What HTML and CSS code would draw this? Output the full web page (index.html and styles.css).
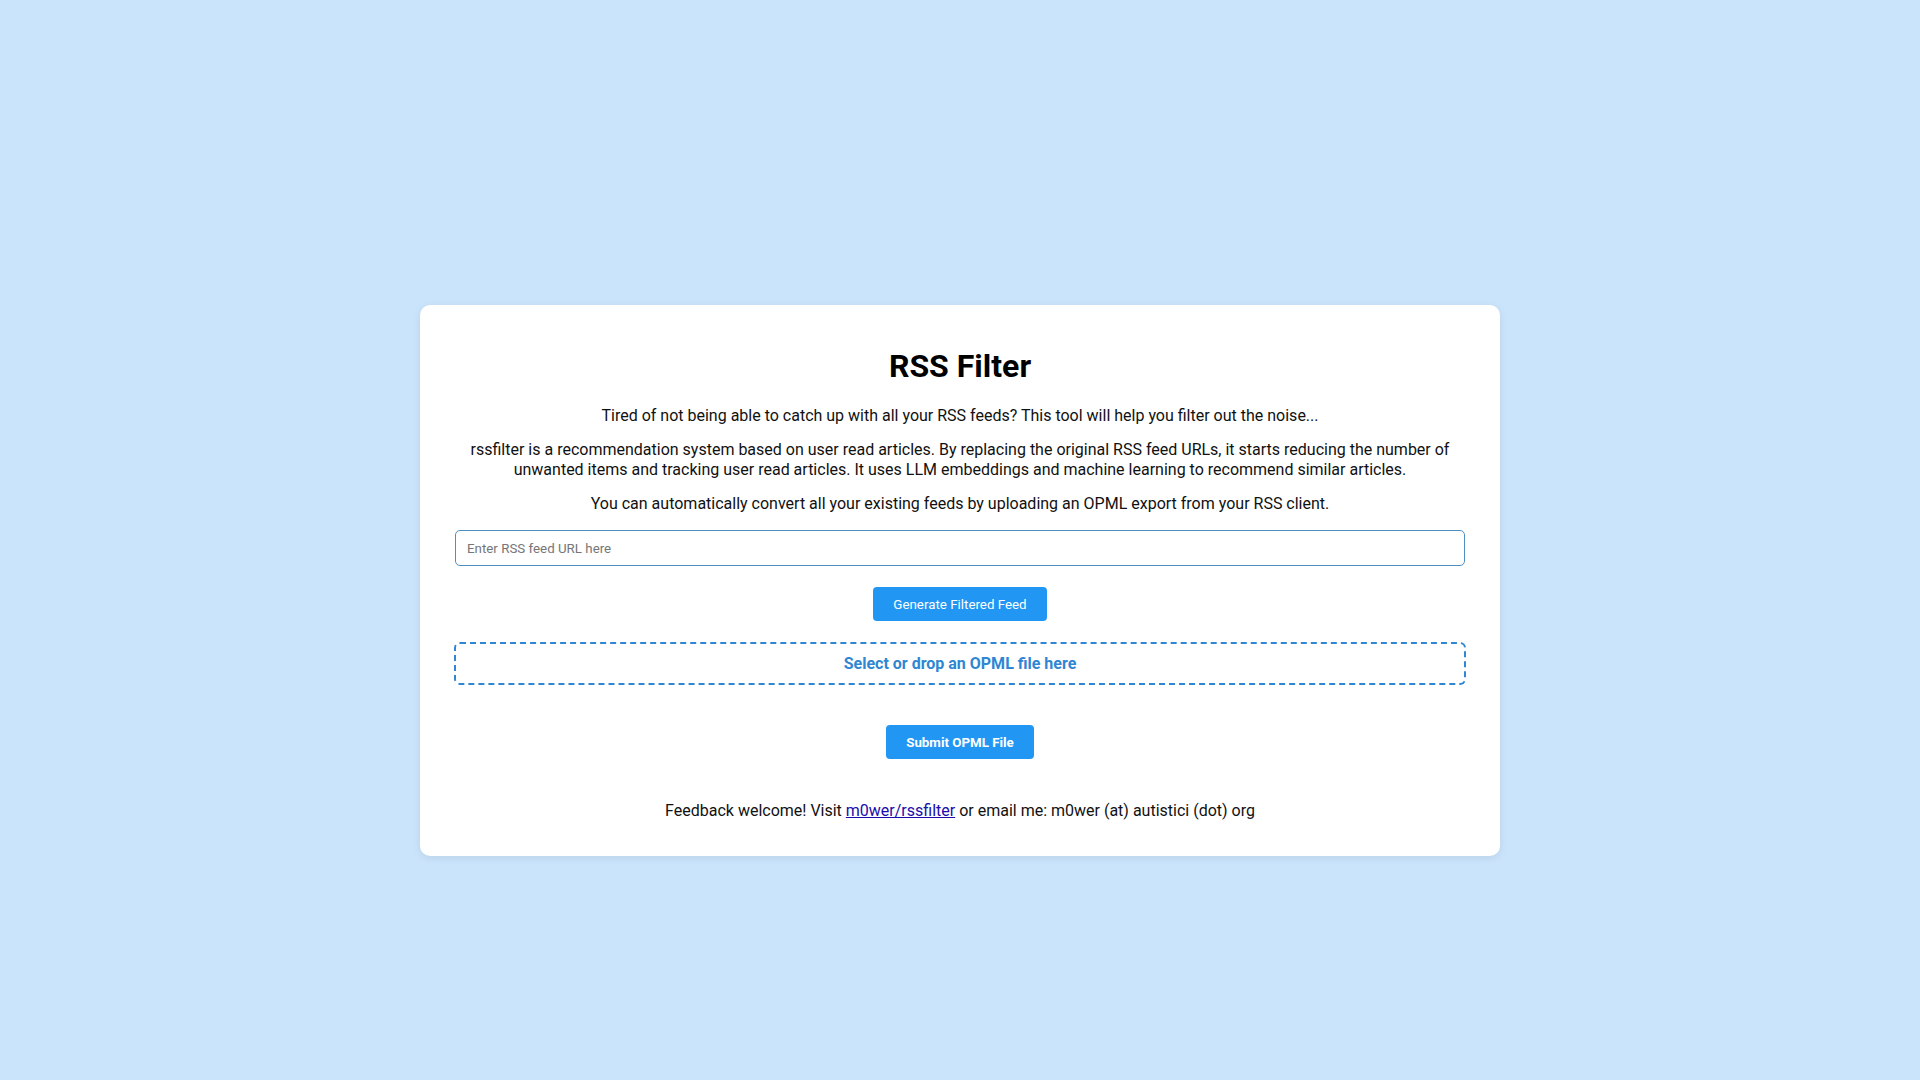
FILE: index.html
```html
<!DOCTYPE html>
<html lang="en">
<head>
<meta charset="utf-8">
<title>RSS Filter</title>
<link rel="stylesheet" href="styles.css">
</head>
<body>
<main class="page">
  <section class="card">
    <h1 class="title">RSS Filter</h1>
    <p class="text">Tired of not being able to catch up with all your RSS feeds? This tool will help you filter out the noise...</p>
    <p class="text">rssfilter is a recommendation system based on user read articles. By replacing the original RSS feed URLs, it starts reducing the number of unwanted items and tracking user read articles. It uses LLM embeddings and machine learning to recommend similar articles.</p>
    <p class="text">You can automatically convert all your existing feeds by uploading an OPML export from your RSS client.</p>
    <input class="url-input" type="text" placeholder="Enter RSS feed URL here">
    <button class="btn btn-generate" type="button">Generate Filtered Feed</button>
    <label class="dropzone">Select or drop an OPML file here</label>
    <button class="btn btn-submit" type="button">Submit OPML File</button>
    <p class="footer">Feedback welcome! Visit <a href="#">m0wer/rssfilter</a> or email me: m0wer (at) autistici (dot) org</p>
  </section>
</main>
</body>
</html>
```

FILE: styles.css
```css
* { box-sizing: border-box; }
html, body {
  margin: 0;
  padding: 0;
}
body {
  background: #cae4fb;
  font-family: Roboto, "Liberation Sans", Arial, sans-serif;
  color: #111;
  min-height: 100vh;
}
.page {
  min-height: 100vh;
  display: flex;
  align-items: flex-start;
  justify-content: center;
  padding-top: 305px;
}
.card {
  width: 1080px;
  background: #fff;
  border-radius: 10px;
  box-shadow: 0 2px 8px rgba(0, 0, 0, 0.08);
  padding: 43px 34px 35px;
  display: flex;
  flex-direction: column;
  align-items: center;
  text-align: center;
}
.title {
  margin: 0 0 21px;
  font-size: 32px;
  font-weight: 700;
  line-height: 37px;
  color: #000;
}
.text {
  margin: 0 0 14px;
  font-size: 16px;
  line-height: 20px;
  color: #111;
}
.text:nth-of-type(3) { margin-bottom: 16px; }
.url-input {
  width: 1010px;
  height: 36px;
  border: 1px solid #4f8fc0;
  border-radius: 5px;
  padding: 0 11px;
  font-family: Roboto, "Liberation Sans", Arial, sans-serif;
  font-size: 13.33px;
  color: #222;
  background: #fff;
  outline: none;
}
.url-input::placeholder { color: #767676; }
.btn {
  border: 0;
  border-radius: 4px;
  background: #2196f3;
  color: #fff;
  font-family: Roboto, "Liberation Sans", Arial, sans-serif;
  font-size: 13.33px;
  height: 34px;
  padding: 0 20px;
  cursor: pointer;
}
.btn-generate {
  margin-top: 21px;
  font-weight: 400;
}
.dropzone {
  margin-top: 21px;
  width: 1012px;
  height: 43px;
  border: 2px dashed #2f86d2;
  border-radius: 6px;
  display: flex;
  align-items: center;
  justify-content: center;
  font-size: 16px;
  font-weight: 700;
  color: #2f86d2;
  cursor: pointer;
}
.btn-submit {
  margin-top: 40px;
  font-weight: 700;
}
.footer {
  margin: 42px 0 0;
  font-size: 16px;
  line-height: 20px;
  color: #111;
}
.footer a {
  color: #1a0dab;
  text-decoration: underline;
}
```
